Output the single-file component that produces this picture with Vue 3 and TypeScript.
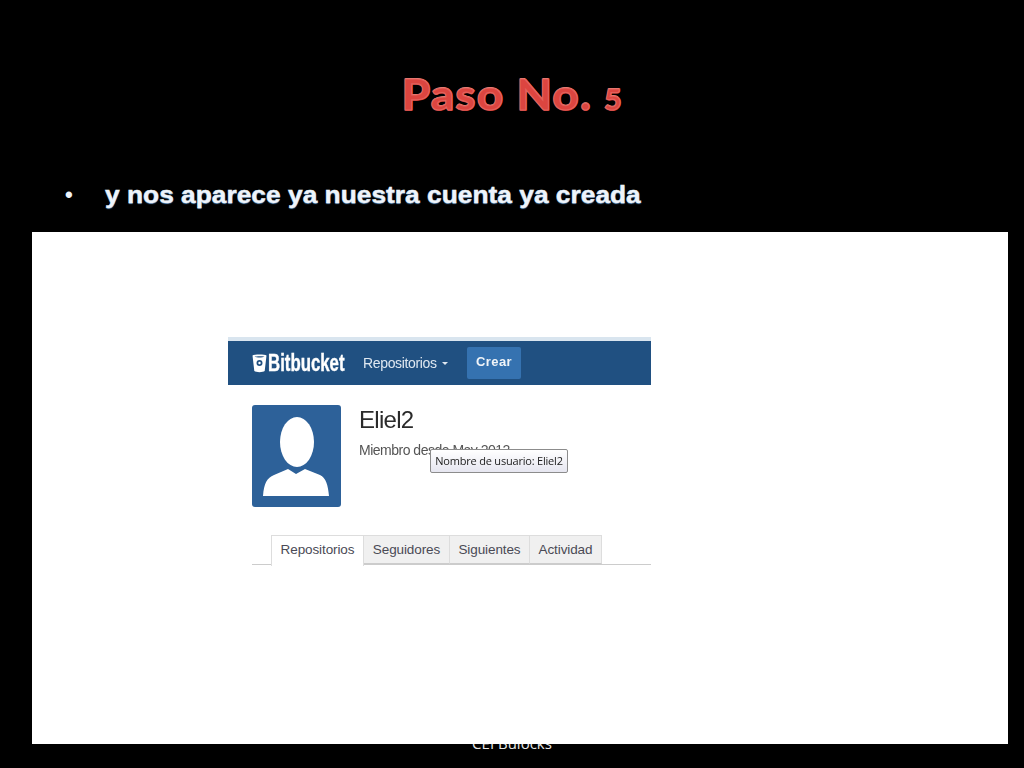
<script setup lang="ts">
const tabs: string[] = ['Repositorios', 'Seguidores', 'Siguientes', 'Actividad']
</script>

<template>
  <div class="slide">
    <header class="title-row">
      <h1 class="title">Paso No. <span class="num">5</span></h1>
    </header>
    <div class="bullet-row">
      <span class="dot">•</span>
      <span class="bullet-text">y nos aparece ya nuestra cuenta ya creada</span>
    </div>
    <main class="panel">
      <section class="shot">
        <nav class="nav">
          <svg class="bucket" width="15" height="19" viewBox="0 0 15 19">
            <path fill="#fff" fill-rule="evenodd" d="M0.5 1.5C2 .3 13 .3 14.500 1.500L12.700 17C11 18.500 4 18.500 2.300 17ZM2.500 2.800C4.500 3.800 10.500 3.800 12.500 2.800C10.500 2 4.500 2 2.500 2.800ZM7.500 6A3 3 0 1 0 7.500 12A3 3 0 1 0 7.500 6ZM7.500 7.800A1.200 1.200 0 1 1 7.500 10.200A1.200 1.200 0 1 1 7.500 7.800Z" />
          </svg>
          <span class="brand"><span class="brand-text">Bitbucket</span></span>
          <span class="repo-link">Repositorios <i class="caret"></i></span>
          <span class="create">Crear</span>
        </nav>
        <div class="profile">
          <div class="avatar">
            <svg width="89" height="102" viewBox="0 0 89 102">
              <ellipse cx="45" cy="37" rx="17" ry="25" fill="#fff" />
              <path fill="#fff" d="M11 91C12 78 15 73 22 70L36 64L44 69L53 64L68 70C74 73 76 80 77 91Z" />
            </svg>
          </div>
          <div class="info">
            <div class="name">Eliel2</div>
            <div class="since">Miembro desde May 2012</div>
            <div class="tip">Nombre de usuario: Eliel2</div>
          </div>
        </div>
        <div class="tabs">
          <span v-for="(t, i) in tabs" :key="t" class="tab" :class="['t' + i, { active: i === 0 }]">{{ t }}</span>
        </div>
      </section>
    </main>
    <footer class="foot"><span>CEI Bulocks</span></footer>
  </div>
</template>

<style scoped>
.slide {
  width: 1024px;
  height: 768px;
  background: #000;
  overflow: hidden;
  font-family: "Liberation Sans", Arial, sans-serif;
}
.title-row {
  height: 174px;
  padding-top: 66px;
  box-sizing: border-box;
  text-align: center;
}
.title {
  margin: 0;
  font-family: "Lato", sans-serif;
  font-weight: 900;
  font-size: 42px;
  line-height: 56px;
  letter-spacing: 1px;
  color: #dc4540;
  -webkit-text-stroke: 1.2px #e2625c;
  text-shadow: 0 -1px 0 #f09088, 0 1px 0 #c83a36;
  display: inline-block;
  transform: scaleX(1.095);
}
.num {
  font-size: 28px;
}
.bullet-row {
  height: 58px;
  display: flex;
  align-items: flex-start;
  padding: 5px 0 0 65px;
  box-sizing: border-box;
  color: #eef4fb;
  font-family: "Liberation Sans", sans-serif;
  font-weight: 700;
  font-size: 23px;
  line-height: 32px;
}
.dot {
  width: 40px;
  font-size: 22px;
}
.bullet-text {
  display: inline-block;
  white-space: nowrap;
  transform: scaleX(1.145);
  transform-origin: left center;
  -webkit-text-stroke: 0.4px #eef4fb;
  text-shadow: 0 1px 1px #3f6f9f;
}
.panel {
  margin-left: 32px;
  width: 976px;
  height: 512px;
  background: #fff;
  padding: 105px 0 0 196px;
  box-sizing: border-box;
}
.shot {
  width: 423px;
  filter: blur(0.5px);
  color: #333;
}
.nav {
  height: 44px;
  background: #205081;
  border-top: 4px solid #d9e5ef;
  display: flex;
  align-items: center;
  padding-left: 24px;
  color: #fff;
}
.bucket {
  flex: none;
}
.brand {
  margin-left: 1px;
  width: 76px;
  flex: none;
  white-space: nowrap;
}
.brand-text {
  display: inline-block;
  font-weight: 700;
  font-size: 23px;
  transform: scaleX(0.73);
  transform-origin: left center;
  -webkit-text-stroke: 0.4px #fff;
}
.repo-link {
  margin-left: 19px;
  width: 104px;
  flex: none;
  font-size: 14px;
  color: #dfe8f1;
  letter-spacing: -0.35px;
}
.caret {
  display: inline-block;
  margin: 0 0 3px 2px;
  border: 3px solid transparent;
  border-top-color: #dfe8f1;
  border-bottom: 0;
}
.create {
  width: 54px;
  height: 32px;
  margin-top: -1px;
  background: #3572b0;
  border-radius: 2px;
  display: flex;
  align-items: center;
  justify-content: center;
  padding-bottom: 2px;
  box-sizing: border-box;
  font-size: 13px;
  font-weight: 700;
  letter-spacing: 0.4px;
  color: #f0f4f8;
}
.profile {
  display: flex;
  padding: 20px 0 0 24px;
}
.avatar {
  width: 89px;
  height: 102px;
  background: #2d6199;
  border-radius: 3px;
  flex: none;
}
.avatar svg {
  display: block;
}
.info {
  position: relative;
  margin-left: 18px;
  flex: 1;
}
.name {
  font-size: 24px;
  line-height: 30px;
  color: #2b2b2b;
  letter-spacing: -0.7px;
}
.since {
  margin-top: 6px;
  font-size: 14px;
  line-height: 18px;
  color: #555;
  letter-spacing: -0.5px;
}
.tip {
  position: absolute;
  left: 71px;
  top: 44px;
  width: 138px;
  height: 24px;
  box-sizing: border-box;
  border: 1px solid #8c8c8c;
  border-radius: 2px;
  background: linear-gradient(#fff, #e6e6f0);
  font-family: "Open Sans", sans-serif;
  font-size: 11px;
  font-weight: 400;
  line-height: 22px;
  text-align: center;
  white-space: nowrap;
  color: #222;
  letter-spacing: -0.2px;
}
.tabs {
  display: flex;
  margin: 28px 0 0 24px;
  padding-left: 19px;
  height: 29px;
  border-bottom: 1.500px solid #ccc;
}
.tab {
  height: 29px;
  box-sizing: border-box;
  background: #f0f0f0;
  border: 1px solid #ddd;
  border-left: 0;
  border-bottom: 1px solid #ccc;
  font-size: 13.500px;
  line-height: 27px;
  text-align: center;
  color: #4a4a55;
  letter-spacing: -0.1px;
}
.t0 { width: 93px; }
.t1 { width: 86px; }
.t2 { width: 80px; }
.t3 { width: 72px; }
.tab.active {
  background: #fff;
  border-left: 1px solid #ddd;
  border-bottom: 0;
  height: 31px;
}
.foot {
  height: 24px;
  overflow: hidden;
  text-align: center;
  color: #e8e8e8;
  font-family: "Open Sans", sans-serif;
  font-size: 15px;
  line-height: 0;
}
.foot span {
  display: block;
  margin-top: -1px;
}
</style>
